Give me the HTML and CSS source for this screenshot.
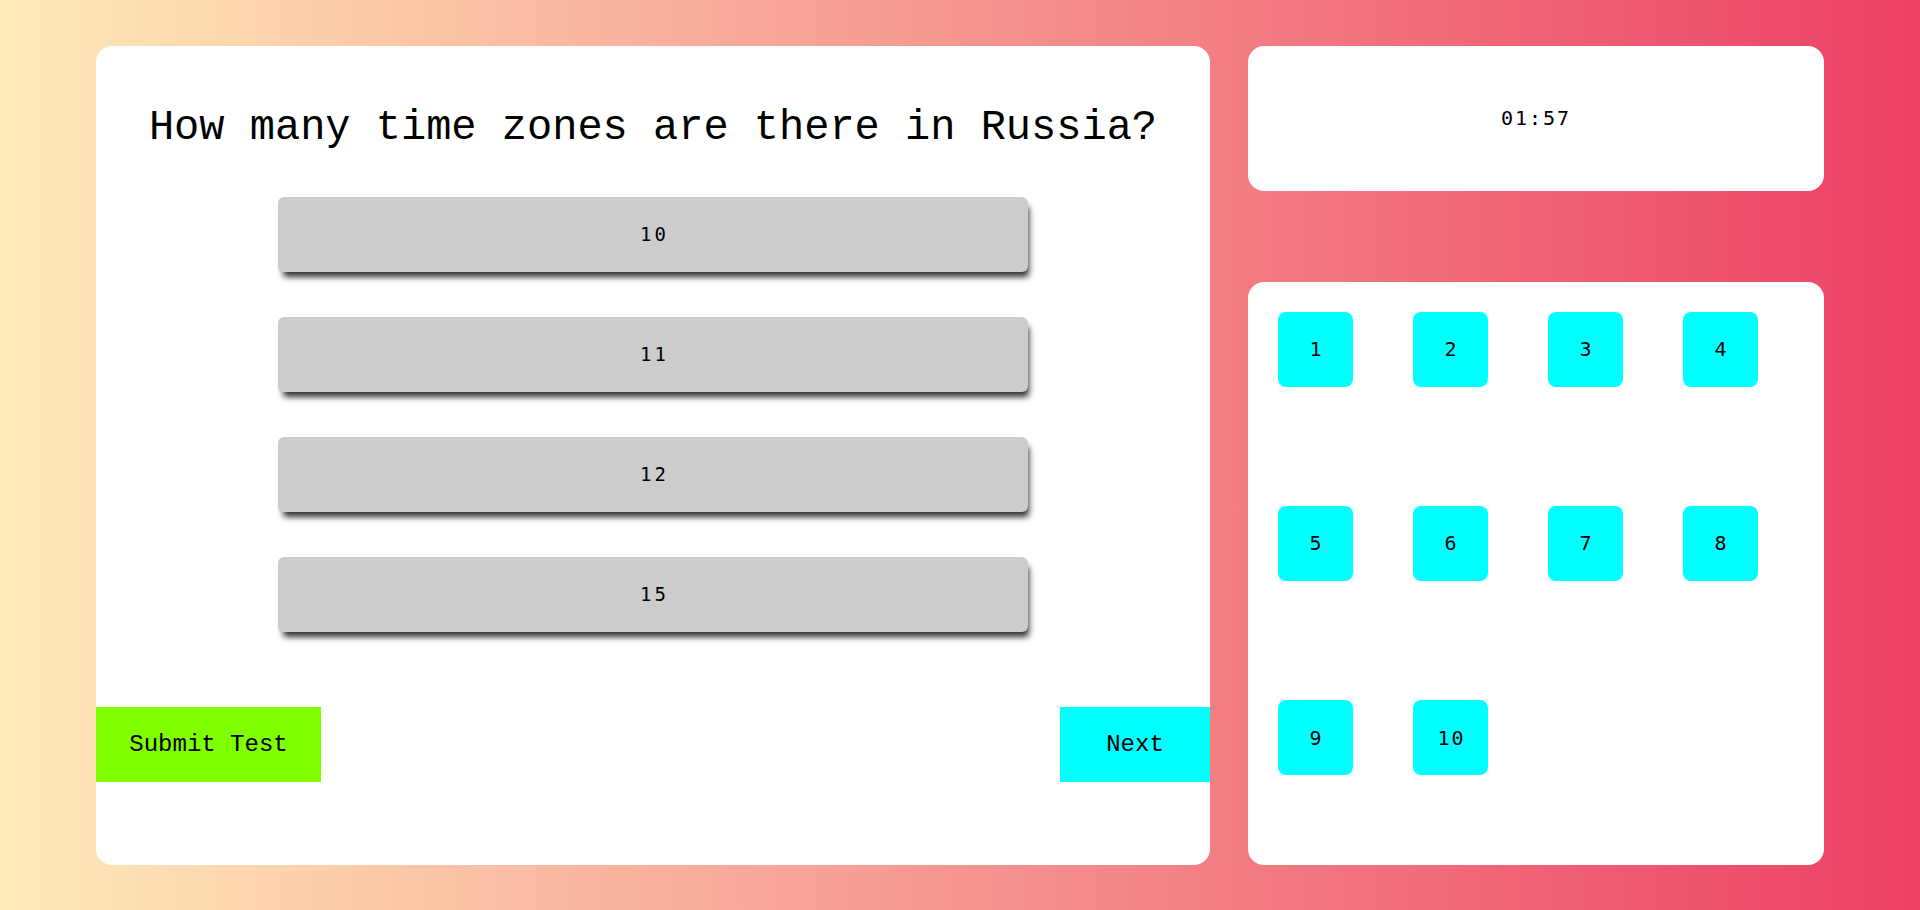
FILE: index.html
```html
<!DOCTYPE html>
<html lang="en">
<head>
<meta charset="utf-8">
<title>Quiz</title>
<link rel="stylesheet" href="styles.css">
</head>
<body>
<div class="app">
  <section class="quiz">
    <h1 class="question">How many time zones are there in Russia?</h1>
    <div class="options">
      <button class="option">10</button>
      <button class="option">11</button>
      <button class="option">12</button>
      <button class="option">15</button>
    </div>
    <div class="actions">
      <button class="btn btn-submit">Submit Test</button>
      <button class="btn btn-next">Next</button>
    </div>
  </section>
  <aside class="side">
    <div class="timer">01:57</div>
    <div class="nav">
      <button class="nav-item">1</button>
      <button class="nav-item">2</button>
      <button class="nav-item">3</button>
      <button class="nav-item">4</button>
      <button class="nav-item">5</button>
      <button class="nav-item">6</button>
      <button class="nav-item">7</button>
      <button class="nav-item">8</button>
      <button class="nav-item">9</button>
      <button class="nav-item">10</button>
    </div>
  </aside>
</div>
</body>
</html>
```
FILE: styles.css
```css
* { box-sizing: border-box; }
html, body { margin: 0; padding: 0; }
body {
  height: 100vh;
  background: linear-gradient(to right, #ffebba, #ec4064);
  display: flex;
  align-items: center;
  justify-content: center;
  font-family: "Liberation Mono", "Courier New", monospace;
}
.app {
  width: 1728px;
  height: 819px;
  display: flex;
  gap: 38px;
}
.quiz {
  width: 1114px;
  height: 100%;
  background: #fff;
  border-radius: 16px;
  display: flex;
  flex-direction: column;
}
.question {
  margin: 58px 0 0;
  font-family: "Liberation Mono", "Courier New", monospace;
  font-size: 42px;
  font-weight: normal;
  line-height: 48px;
  text-align: center;
  color: #000;
}
.options {
  margin-top: 45px;
  display: flex;
  flex-direction: column;
  align-items: center;
  gap: 45px;
}
.option {
  width: 750px;
  height: 75px;
  border: none;
  border-radius: 6px;
  background: #cccccc;
  box-shadow: 3px 7px 6px -2px #333;
  font-family: "DejaVu Sans Mono", monospace;
  font-size: 19px;
  letter-spacing: 3px;
  color: #000;
  padding: 0 0 0 3px;
}
.actions {
  margin-top: 75px;
  display: flex;
  justify-content: space-between;
}
.btn {
  height: 75px;
  border: none;
  padding: 0;
  font-family: "Liberation Mono", "Courier New", monospace;
  font-size: 24px;
  color: #000;
}
.btn-submit { width: 225px; background: #7fff00; }
.btn-next { width: 150px; background: #00ffff; }
.side {
  width: 576px;
  height: 100%;
  display: flex;
  flex-direction: column;
  justify-content: space-between;
}
.timer {
  height: 145px;
  background: #fff;
  border-radius: 16px;
  display: flex;
  align-items: center;
  justify-content: center;
  font-family: "DejaVu Sans Mono", monospace;
  font-size: 20px;
  letter-spacing: 2px;
  color: #000;
}
.nav {
  height: 583px;
  background: #fff;
  border-radius: 16px;
  display: flex;
  flex-wrap: wrap;
  align-content: stretch;
  align-items: flex-start;
}
.nav-item {
  width: 75px;
  height: 75px;
  margin: 30px;
  border: none;
  border-radius: 8px;
  background: #00ffff;
  padding: 0 0 0 2px;
  font-family: "DejaVu Sans Mono", monospace;
  font-size: 20px;
  letter-spacing: 2px;
  color: #000;
}
```
